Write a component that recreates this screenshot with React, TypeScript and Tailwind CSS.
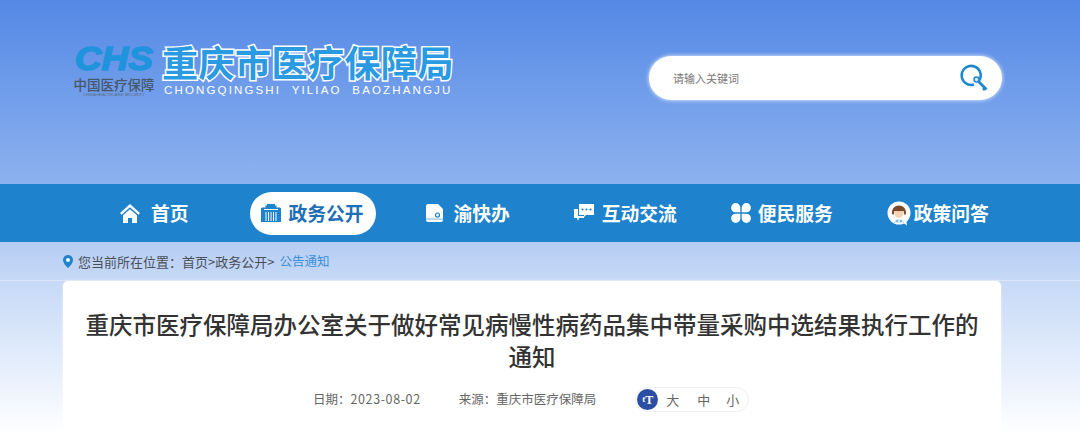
import React from "react";

const font = "font-['Noto_Sans_CJK_SC','Noto_Sans',sans-serif]";

function LogoMark() {
  return (
    <div className="flex w-[84px] flex-col items-center">
      <span className="mt-[4px] origin-center scale-x-[1.12] font-['Liberation_Sans',sans-serif] text-[33px] leading-[28px] font-black text-[#1f93dc] italic [-webkit-text-stroke:1.5px_#1f93dc]">
        CHS
      </span>
      <span className="mt-[3px] text-[13.5px] leading-[16px] font-medium whitespace-nowrap text-[#46566c]">中国医疗保障</span>
      <span className="font-['Liberation_Sans',sans-serif] text-[4px] leading-[5px] whitespace-nowrap text-[#5a6a80]">CHINA HEALTHCARE SECURITY</span>
    </div>
  );
}

function HomeIcon() {
  return (
    <svg width="20" height="19" viewBox="0 0 20 19" fill="#fff" className="mr-[11px]">
      <path d="M10 0 20 9l-1.500 1.700L10 3.200 1.500 10.700 0 9z" />
      <path d="M10 5.200 17 11.300V19h-5v-5H8v5H3v-7.700z" />
    </svg>
  );
}

function ArchiveIcon() {
  return (
    <svg width="20" height="18" viewBox="0 0 20 18">
      <path d="M0 5c0-1 .5-1.500 2-1.500h2.500V1.500h1.500V0h8v1.500h1.500v2H18c1.500 0 2 .5 2 1.500v13H0z" fill="#1e82cd" />
      <path d="M3 5.500h14" stroke="#fff" strokeWidth="1" />
      <path d="M5 8v9M7.500 8v9M10 8v9M12.500 8v9M15 8v9" stroke="#fff" strokeWidth="1" />
    </svg>
  );
}

function DocIcon() {
  return (
    <svg width="18" height="18" viewBox="0 0 18 18">
      <path d="M2 0h10l5 5v11a2 2 0 0 1-2 2H2a2 2 0 0 1-2-2V2a2 2 0 0 1 2-2z" fill="#fff" />
      <circle cx="11.500" cy="11" r="2" fill="none" stroke="#1e82cd" strokeWidth="1.200" />
      <path d="M0 15h17" stroke="#1e82cd" strokeWidth="0.600" />
    </svg>
  );
}

function ChatIcon() {
  return (
    <svg width="20" height="18" viewBox="0 0 20 18">
      <path d="M5 0h15v11h-8l-2 2v-2H5z" fill="#fff" />
      <path d="M0 5h4v7h6v2H5l-1 3-1-3H0z" fill="#fff" />
      <circle cx="8.500" cy="5.500" r="1.100" fill="#1e82cd" />
      <circle cx="12.500" cy="5.500" r="1.100" fill="#1e82cd" />
      <circle cx="16.500" cy="5.500" r="1.100" fill="#1e82cd" />
    </svg>
  );
}

function CloverIcon() {
  return (
    <svg width="20" height="20" viewBox="0 0 20 20" fill="#fff">
      <path d="M9.300 9.300H4.600a4.600 4.600 0 1 1 4.700-4.700z" />
      <path d="M10.700 9.300h4.700a4.600 4.600 0 1 0-4.700-4.700z" />
      <path d="M9.300 10.700H4.600a4.600 4.600 0 1 0 4.700 4.700z" />
      <path d="M10.700 10.700h4.700a4.600 4.600 0 1 1-4.700 4.700z" />
    </svg>
  );
}

function AvatarIcon() {
  return (
    <svg width="24" height="25" viewBox="0 0 24 25">
      <circle cx="12" cy="12" r="11.500" fill="#fff" />
      <path d="M15 21l5 3.500-1-6z" fill="#fff" />
      <path d="M5 13c-.5-5.500 3-8.500 7-8.500s7.500 3 7 8.500l-1.500 1-1-4c-2.500.5-6.500.5-9 0l-1 4z" fill="#7a4a2a" />
      <path d="M7.500 10c2.500.6 6.500.6 9 0 .5 4-1.500 7-4.500 7s-5-3-4.500-7z" fill="#f6d3b3" />
      <path d="M7 22c0-3 2-4 5-4s5 1 5 4z" fill="#cfe6f5" />
      <circle cx="10" cy="20" r=".8" fill="#1e88cf" />
      <circle cx="14" cy="20" r=".8" fill="#1e88cf" />
    </svg>
  );
}

function KeySearchIcon() {
  return (
    <svg width="28" height="28" viewBox="0 0 28 28" fill="none">
      <path d="M18.500 17.500A9.500 9.500 0 1 0 14 20.500" stroke="#1e88cf" strokeWidth="2.600" />
      <circle cx="16.500" cy="15.500" r="2.500" stroke="#1e88cf" strokeWidth="1.500" fill="#d7ebf8" />
      <path d="M18.500 17.500l8 8M23 26l2.500-2.500" stroke="#1e88cf" strokeWidth="2.800" />
    </svg>
  );
}

function NavItem({ icon, label, className }: { icon: React.ReactNode; label: string; className: string }) {
  return (
    <a className={`flex items-center text-[18.750px] font-bold whitespace-nowrap text-white ${className}`}>
      {icon}
      <span>{label}</span>
    </a>
  );
}

export default function App() {
  return (
    <div className={`h-[434px] overflow-hidden bg-white ${font}`}>
      <header className="flex h-[184px] items-start bg-gradient-to-b from-[#5488e6] to-[#8db2ee] pt-[41px] pl-[72px]">
        <LogoMark />
        <div className="ml-[6px] flex flex-col">
          <h1 className="text-[36px] leading-[40px] font-bold tracking-[0.500px] whitespace-nowrap text-[#2a9ae2] [paint-order:stroke_fill] [-webkit-text-stroke:3px_#fff]">
            重庆市医疗保障局
          </h1>
          <p className="mt-[2px] ml-[2px] font-['Liberation_Sans',sans-serif] text-[11.500px] leading-[14px] tracking-[2.150px] whitespace-pre text-white">
            CHONGQINGSHI  YILIAO  BAOZHANGJU
          </p>
        </div>
        <div className="mt-[15px] ml-[195px] flex h-[44px] w-[353px] items-center justify-between rounded-full bg-white pr-[14px] pl-[24px] shadow-[0_0_4px_rgba(255,255,255,0.9)]">
          <span className="text-[11px] text-[#777]">请输入关键词</span>
          <KeySearchIcon />
        </div>
      </header>

      <nav className="flex h-[58px] items-center bg-[#1e82cd] pl-[120px]">
        <NavItem icon={<HomeIcon />} label="首页" className="" />
        <div className="ml-[61px] flex h-[43px] items-center gap-[8px] rounded-full bg-white pr-[12px] pl-[11px] text-[18.750px] font-bold whitespace-nowrap text-[#1e6fb5]">
          <ArchiveIcon />
          <span>政务公开</span>
        </div>
        <NavItem icon={<span className="mr-[10px] flex"><DocIcon /></span>} label="渝快办" className="ml-[50px]" />
        <NavItem icon={<span className="mr-[8px] flex"><ChatIcon /></span>} label="互动交流" className="ml-[64px]" />
        <NavItem icon={<span className="mr-[7px] flex"><CloverIcon /></span>} label="便民服务" className="ml-[54px]" />
        <NavItem icon={<span className="mr-[3px] flex"><AvatarIcon /></span>} label="政策问答" className="ml-[54px]" />
      </nav>

      <div className="flex h-[39px] items-start border-b border-[#dbe5f5] bg-gradient-to-b from-[#b5cdf3] to-[#c6d9f7] px-[63px] pt-[12px]">
        <div className="flex h-[15px] items-center text-[13px] whitespace-nowrap text-[#4a4f58]">
          <svg width="10" height="13" viewBox="0 0 10 13" className="mr-[5px]">
            <path d="M5 0a5 5 0 0 1 5 5c0 3-3 6-5 8-2-2-5-5-5-8a5 5 0 0 1 5-5z" fill="#1e82cd" />
            <circle cx="5" cy="5" r="2" fill="#fff" />
          </svg>
          <span>您当前所在位置：</span>
          <span>首页&gt;政务公开&gt;</span>
          <span className="ml-[5px] text-[12.500px] text-[#3d8fd6]">公告通知</span>
        </div>
      </div>

      <div className="h-[153px] bg-gradient-to-b from-[#c6d9f7] to-white pl-[63px]">
        <main className="h-[153px] w-[938px] rounded-t-[5px] bg-white pt-[27px] shadow-[0_0_3px_rgba(255,255,255,0.6)]">
          <h2 className="text-center text-[23.500px] leading-[32px] font-medium text-[#333]">
            重庆市医疗保障局办公室关于做好常见病慢性病药品集中带量采购中选结果执行工作的
            <br />
            通知
          </h2>
          <div className="mt-[15px] ml-[250px] flex items-center text-[12.500px] whitespace-nowrap text-[#666]">
            <span>
              日期：<span className="tracking-[0.600px]">2023-08-02</span>
            </span>
            <span className="ml-[38px]">来源：重庆市医疗保障局</span>
            <div className="ml-[39px] flex h-[25px] w-[114px] items-center rounded-full border border-[#eef0f4] pl-[1px] text-[13px] text-[#666]">
              <span className="flex h-[21px] w-[21px] items-center justify-center rounded-full bg-[#2c4fa3] font-['Liberation_Serif',serif] text-[12px] font-bold text-white">
                <span className="text-[9px]">t</span>T
              </span>
              <span className="ml-[8px]">大</span>
              <span className="ml-[18px]">中</span>
              <span className="ml-[16px]">小</span>
            </div>
          </div>
        </main>
      </div>
    </div>
  );
}
